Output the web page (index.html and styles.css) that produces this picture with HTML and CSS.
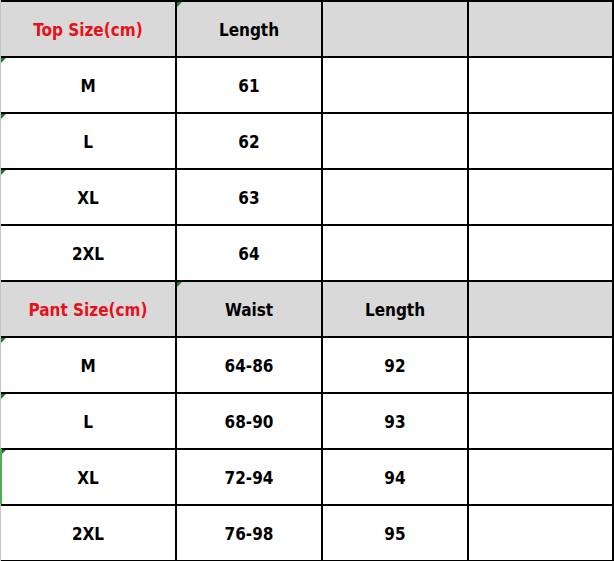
FILE: index.html
```html
<!DOCTYPE html>
<html>
<head>
<meta charset="utf-8">
<link rel="stylesheet" href="styles.css">
</head>
<body>
<div class="sheet">
  <div class="cell head red">Top Size(cm)</div>
  <div class="cell head mark">Length</div>
  <div class="cell head"></div>
  <div class="cell head"></div>

  <div class="cell mark">M</div>
  <div class="cell">61</div>
  <div class="cell"></div>
  <div class="cell"></div>

  <div class="cell mark">L</div>
  <div class="cell">62</div>
  <div class="cell"></div>
  <div class="cell"></div>

  <div class="cell mark">XL</div>
  <div class="cell">63</div>
  <div class="cell"></div>
  <div class="cell"></div>

  <div class="cell">2XL</div>
  <div class="cell">64</div>
  <div class="cell"></div>
  <div class="cell"></div>

  <div class="cell head red">Pant Size(cm)</div>
  <div class="cell head mark">Waist</div>
  <div class="cell head">Length</div>
  <div class="cell head"></div>

  <div class="cell mark">M</div>
  <div class="cell">64-86</div>
  <div class="cell">92</div>
  <div class="cell"></div>

  <div class="cell mark">L</div>
  <div class="cell">68-90</div>
  <div class="cell">93</div>
  <div class="cell"></div>

  <div class="cell mark edge">XL</div>
  <div class="cell">72-94</div>
  <div class="cell">94</div>
  <div class="cell"></div>

  <div class="cell">2XL</div>
  <div class="cell">76-98</div>
  <div class="cell">95</div>
  <div class="cell"></div>
</div>
</body>
</html>
```
FILE: styles.css
```css
html, body {
  margin: 0;
  padding: 0;
  background: #ffffff;
}

.sheet {
  display: grid;
  grid-template-columns: 174px 144px 144px 143px;
  grid-auto-rows: 54px;
  gap: 2px;
  padding: 2px 2px 2px 0;
  border-left: 1px solid #c4c4c4;
  background: #000000;
  width: 611px;
}

.cell {
  position: relative;
  display: flex;
  align-items: center;
  justify-content: center;
  background: #ffffff;
  font-family: "DejaVu Sans Condensed", "DejaVu Sans", sans-serif;
  font-stretch: condensed;
  font-weight: bold;
  font-size: 17px;
  color: #000000;
  padding-top: 2px;
  box-sizing: border-box;
}

.head {
  background: #d9d9d9;
}

.red {
  color: #e5121b;
}

.mark::before {
  content: "";
  position: absolute;
  top: 0;
  left: 0;
  width: 0;
  height: 0;
  border-top: 5px solid #1f7a3a;
  border-right: 5px solid transparent;
}

.edge::after {
  content: "";
  position: absolute;
  top: -1px;
  bottom: 0;
  left: -1px;
  width: 2px;
  background: #4caf50;
}
```
